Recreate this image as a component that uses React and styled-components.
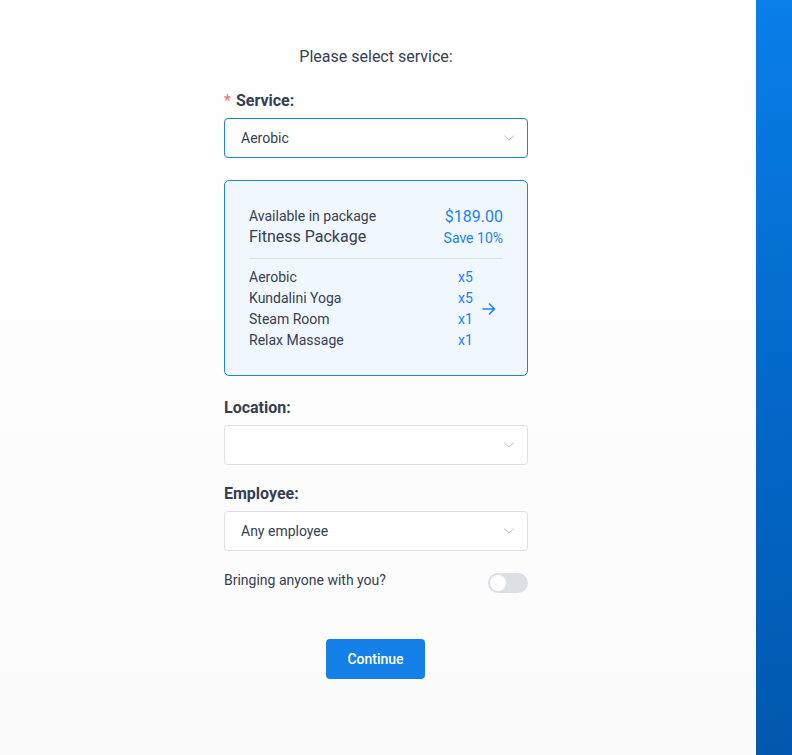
import React from "react";
import styled, { createGlobalStyle } from "styled-components";

const Global = createGlobalStyle`
  html, body { margin: 0; padding: 0; }
  body { font-family: Roboto, "Noto Sans", Arial, sans-serif; color: #354052; }
  * { box-sizing: border-box; }
`;

const Page = styled.div`
  display: flex;
  width: 792px;
  height: 755px;
  overflow: hidden;
`;

const Main = styled.main`
  flex: 1;
  background: linear-gradient(180deg, #ffffff 0%, #fbfbfb 100%);
  display: flex;
  justify-content: center;
  padding-top: 45px;
  padding-right: 4px;
`;

const Side = styled.aside`
  width: 36px;
  background: linear-gradient(170deg, #0a7fe8 0%, #0269cb 50%, #0258ad 100%);
`;

const Column = styled.div`
  width: 304px;
  display: flex;
  flex-direction: column;
`;

const Heading = styled.h1`
  margin: 0;
  font-size: 16px;
  font-weight: 400;
  line-height: 24px;
  text-align: center;
  color: #354052;
`;

const Label = styled.label`
  display: block;
  margin-top: ${(p) => p.$mt}px;
  margin-bottom: 5px;
  font-size: 16px;
  font-weight: 700;
  line-height: 24px;
  color: #354052;
`;

const Star = styled.span`
  color: #f56c6c;
  font-weight: 400;
  margin-right: 5px;
`;

const SelectBox = styled.div`
  height: 40px;
  border: 1px solid ${(p) => (p.$active ? "#1a84ee" : "#dcdfe6")};
  border-radius: 4px;
  background: #fff;
  display: flex;
  align-items: center;
  justify-content: space-between;
  padding: 0 12px 0 16px;
  font-size: 14px;
  color: #354052;
`;

const Chevron = () => (
  <svg width="12" height="8" viewBox="0 0 12 8" fill="none">
    <path d="M1 1.5 L6 6 L11 1.5" stroke="#c0c4cc" strokeWidth="1" />
  </svg>
);

const Card = styled.div`
  margin-top: 22px;
  border: 1px solid #1a84ee;
  border-radius: 5px;
  background: #f1f7fe;
  padding: 25px 24px 24px 24px;
`;

const CardHead = styled.div`
  display: flex;
  justify-content: space-between;
  padding-bottom: 10px;
  border-bottom: 1px solid #dde3ea;
`;

const Stack = styled.div`
  display: flex;
  flex-direction: column;
  align-items: ${(p) => (p.$right ? "flex-end" : "flex-start")};
`;

const Small = styled.div`
  font-size: 14px;
  line-height: 20px;
  color: ${(p) => (p.$blue ? "#1a84ee" : "#354052")};
`;

const Big = styled.div`
  font-size: 16px;
  line-height: 22px;
  color: ${(p) => (p.$blue ? "#1a84ee" : "#354052")};
`;

const Items = styled.div`
  margin-top: 8px;
  display: flex;
  align-items: center;
`;

const List = styled.div`
  flex: 1;
  display: flex;
  flex-direction: column;
`;

const ItemRow = styled.div`
  display: grid;
  grid-template-columns: 1fr 16px;
  font-size: 14px;
  line-height: 21px;
`;

const Name = styled.span`
  color: #354052;
`;

const Qty = styled.span`
  color: #1a84ee;
`;

const ArrowBox = styled.div`
  width: 29px;
  display: flex;
  justify-content: center;
  align-items: center;
`;

const Arrow = () => (
  <svg width="14" height="12" viewBox="0 0 14 12" fill="none">
    <path d="M1 6 H12.5 M7.5 1 L12.5 6 L7.5 11" stroke="#1a84ee" strokeWidth="1.6" strokeLinecap="round" strokeLinejoin="round" />
  </svg>
);

const ToggleRow = styled.div`
  margin-top: 19px;
  display: flex;
  justify-content: space-between;
  align-items: flex-start;
`;

const ToggleText = styled.span`
  font-size: 14px;
  line-height: 20px;
  color: #354052;
`;

const Toggle = styled.div`
  margin-top: 3px;
  width: 40px;
  height: 20px;
  border-radius: 10px;
  background: #dcdfe6;
  position: relative;
  &::after {
    content: "";
    position: absolute;
    left: 2px;
    top: 2px;
    width: 16px;
    height: 16px;
    border-radius: 50%;
    background: #fff;
  }
`;

const Button = styled.button`
  align-self: center;
  margin-top: 46px;
  width: 99px;
  height: 40px;
  border: none;
  border-radius: 4px;
  background: #1480e8;
  color: #fff;
  font-family: Roboto, Arial, sans-serif;
  font-size: 14px;
  font-weight: 500;
  margin-left: -1px;
`;

const items = [
  ["Aerobic", "x5"],
  ["Kundalini Yoga", "x5"],
  ["Steam Room", "x1"],
  ["Relax Massage", "x1"],
];

export default function App() {
  return (
    <>
      <Global />
      <Page>
        <Main>
          <Column>
            <Heading>Please select service:</Heading>
            <Label $mt={20}>
              <Star>*</Star>Service:
            </Label>
            <SelectBox $active>
              <span>Aerobic</span>
              <Chevron />
            </SelectBox>
            <Card>
              <CardHead>
                <Stack>
                  <Small>Available in package</Small>
                  <Big>Fitness Package</Big>
                </Stack>
                <Stack $right>
                  <Big $blue>$189.00</Big>
                  <Small $blue>Save 10%</Small>
                </Stack>
              </CardHead>
              <Items>
                <List>
                  {items.map(([n, q]) => (
                    <ItemRow key={n}>
                      <Name>{n}</Name>
                      <Qty>{q}</Qty>
                    </ItemRow>
                  ))}
                </List>
                <ArrowBox>
                  <Arrow />
                </ArrowBox>
              </Items>
            </Card>
            <Label $mt={20}>Location:</Label>
            <SelectBox>
              <span></span>
              <Chevron />
            </SelectBox>
            <Label $mt={17}>Employee:</Label>
            <SelectBox>
              <span>Any employee</span>
              <Chevron />
            </SelectBox>
            <ToggleRow>
              <ToggleText>Bringing anyone with you?</ToggleText>
              <Toggle />
            </ToggleRow>
            <Button>Continue</Button>
          </Column>
        </Main>
        <Side />
      </Page>
    </>
  );
}
